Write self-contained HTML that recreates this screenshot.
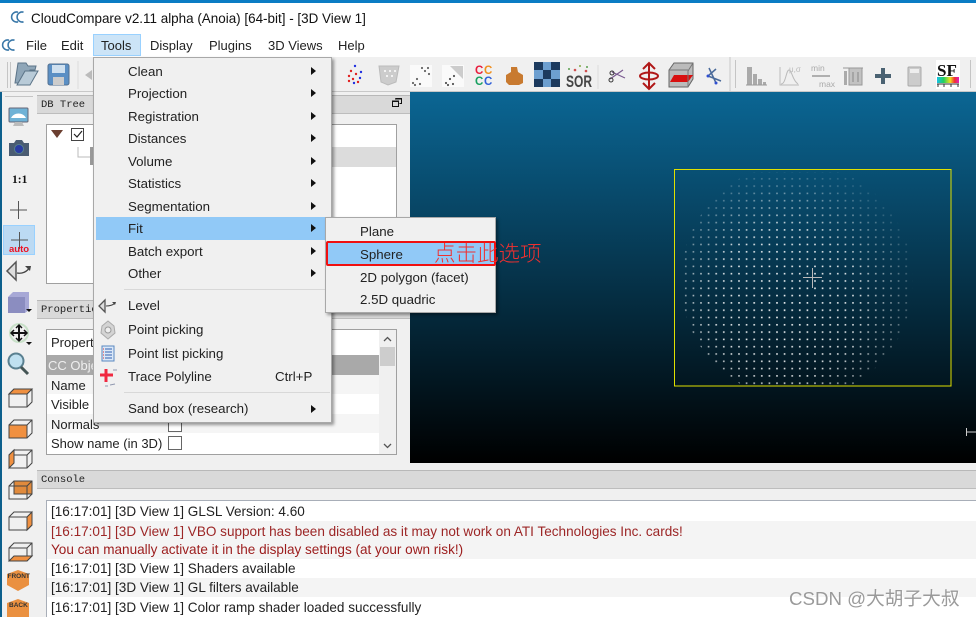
<!DOCTYPE html>
<html><head><meta charset="utf-8"><style>
html,body{margin:0;padding:0;width:976px;height:617px;overflow:hidden;background:#f0f0f0;font-family:"Liberation Sans","Noto Sans CJK SC",sans-serif;font-size:13.300px;color:#222}
#w{position:absolute;left:0;top:0;width:976px;height:617px;overflow:hidden}
.a{position:absolute;white-space:nowrap}
.t{position:absolute;white-space:nowrap;line-height:16px;height:16px;margin-top:1px}
.p{font-size:13px}
.c{font-size:13.550px;letter-spacing:0}
.dock{position:absolute;background:#d9d9d9;border-top:1px solid #b8b8b8;border-bottom:1px solid #bdbdbd;box-sizing:border-box;font:10.500px/19px "Liberation Mono",monospace;color:#222;padding-left:4px}
.box{position:absolute;background:#fff;border:1px solid #a0a0a0;box-sizing:border-box;overflow:hidden}
.ar{position:absolute;width:0;height:0;margin-top:1px;border-left:5px solid #111;border-top:4px solid transparent;border-bottom:4px solid transparent}
.menu{position:absolute;background:#f0f0f0;border:1px solid #a8a8a8;box-shadow:2px 2px 3px rgba(0,0,0,.4);box-sizing:border-box}
.cb{position:absolute;width:12px;height:12px;border:1px solid #666;background:#fff}
</style></head><body><div id="w">

<div class="a" style="left:0;top:0;width:976px;height:3px;background:#0a7cc4"></div>
<div class="a" style="left:0;top:3px;width:976px;height:54px;background:#fff"></div>
<div class="a" style="left:0;top:57px;width:976px;height:35px;background:#f0f0f0;border-bottom:1px solid #c8c8c8;box-sizing:border-box"></div>
<div class="a" style="left:0;top:92px;width:2px;height:525px;background:#0c5f8c"></div>

<svg class="a" style="left:10px;top:9px" width="18" height="16" viewBox="0 0 18 16"><g fill="none" stroke="#3a78a8" stroke-width="1.600"><path d="M8 3.200A5 5 0 1 0 8 12.800"/><path d="M13.500 3.200A5 5 0 1 0 13.500 12.800"/></g></svg>
<div class="t" style="left:31px;top:10px;color:#111;font-size:13.450px">CloudCompare v2.11 alpha (Anoia) [64-bit] - [3D View 1]</div>
<svg class="a" style="left:1px;top:37px" width="18" height="16" viewBox="0 0 18 16"><g fill="none" stroke="#3a78a8" stroke-width="1.600"><path d="M8 3.200A5 5 0 1 0 8 12.800"/><path d="M13.500 3.200A5 5 0 1 0 13.500 12.800"/></g></svg>
<div class="a" style="left:93px;top:34px;width:48px;height:22px;background:#cce4f7;border:1px solid #99d1ff;box-sizing:border-box"></div>
<div class="t p" style="left:26px;top:37px">File</div>
<div class="t p" style="left:61px;top:37px">Edit</div>
<div class="t p" style="left:101px;top:37px">Tools</div>
<div class="t p" style="left:150px;top:37px">Display</div>
<div class="t p" style="left:209px;top:37px">Plugins</div>
<div class="t p" style="left:268px;top:37px">3D Views</div>
<div class="t p" style="left:338px;top:37px">Help</div>

<!-- 3D view -->
<div class="a" style="left:410px;top:92px;width:566px;height:371px;background:linear-gradient(#0b6694 0%,#000 100%)"></div>
<svg class="a" style="left:0;top:0" width="976" height="617">
<defs>
<pattern id="p" x="683" y="176" width="7.600" height="7.300" patternUnits="userSpaceOnUse"><rect x="2" y="2" width="1.600" height="1.600" fill="#fff"/></pattern>
<radialGradient id="g" gradientUnits="userSpaceOnUse" cx="785" cy="305" r="135"><stop offset="0" stop-color="#fff"/><stop offset=".55" stop-color="#ddd"/><stop offset=".8" stop-color="#777"/><stop offset="1" stop-color="#2a2a2a"/></radialGradient>
<mask id="m" maskUnits="userSpaceOnUse" x="670" y="160" width="260" height="240"><rect x="670" y="160" width="260" height="240" fill="url(#g)"/></mask>
<clipPath id="c"><rect x="675" y="172" width="250" height="214"/></clipPath>
</defs>
<g clip-path="url(#c)"><ellipse cx="797" cy="281" rx="116" ry="118" fill="url(#p)" mask="url(#m)"/></g>
<rect x="674.500" y="169.500" width="276.500" height="216.500" fill="none" stroke="#e0e000" stroke-width="1"/>
<path d="M803 277.500H822M812.500 268V288" stroke="#bbb" stroke-width="1"/>
<path d="M966.500 428V436M967 432H976" stroke="#ccc" stroke-width="1"/>
</svg>

<!-- DB tree -->
<div class="dock" style="left:37px;top:95px;width:373px;height:19px">DB Tree</div>
<svg class="a" style="left:392px;top:98px" width="10" height="10"><path d="M3.500.500h6v5h-2M.500 3.500h6v5h-6z" fill="none" stroke="#111"/><path d="M3 1h7M0 3h7" stroke="#111"/></svg>
<div class="box" style="left:46px;top:124px;width:351px;height:160px"></div>
<div class="a" style="left:332px;top:147px;width:64px;height:20px;background:#dcdcdc"></div>
<svg class="a" style="left:46px;top:124px" width="50" height="50"><path d="M5 6H17L11 14Z" fill="#6b3f30"/><rect x="25.500" y="4.500" width="12" height="12" fill="#fff" stroke="#444"/><path d="M28 10l3 3 5-6" fill="none" stroke="#222" stroke-width="1.200"/><path d="M32 23v10h12" fill="none" stroke="#bbb"/><rect x="44" y="23" width="3" height="18" fill="#999"/></svg>

<!-- Properties -->
<div class="dock" style="left:37px;top:300px;width:373px;height:19px">Properties</div>
<div class="box" style="left:46px;top:329px;width:351px;height:126px"></div>
<div class="t p" style="left:51px;top:334px">Properties</div>
<div class="a" style="left:47px;top:355px;width:332px;height:20px;background:#a9a9a9"></div>
<div class="t p" style="left:48px;top:357px;color:#eee">CC Object</div>
<div class="a" style="left:47px;top:375px;width:332px;height:19px;background:#f5f5f5"></div>
<div class="a" style="left:47px;top:414px;width:332px;height:19px;background:#f5f5f5"></div>
<div class="t p" style="left:51px;top:377px">Name</div>
<div class="t p" style="left:51px;top:396px">Visible</div>
<div class="t p" style="left:51px;top:416px">Normals</div>
<div class="t p" style="left:51px;top:435px">Show name (in 3D)</div>
<div class="cb" style="left:168px;top:418px"></div>
<div class="cb" style="left:168px;top:436px"></div>
<div class="a" style="left:379px;top:330px;width:17px;height:124px;background:#f0f0f0"></div>
<div class="a" style="left:380px;top:347px;width:15px;height:19px;background:#cdcdcd"></div>
<svg class="a" style="left:379px;top:330px" width="17" height="124"><path d="M5 11l3.500-3.500L12 11M5 114l3.500 3.500L12 114" fill="none" stroke="#555" stroke-width="1.300"/></svg>

<!-- Console -->
<div class="dock" style="left:37px;top:470px;width:939px;height:19px">Console</div>
<div class="box" style="left:46px;top:500px;width:940px;height:127px;border-color:#a8aeb8"></div>
<div class="a" style="left:47px;top:521px;width:929px;height:38px;background:#f4f4f4"></div>
<div class="a" style="left:47px;top:578px;width:929px;height:19px;background:#f4f4f4"></div>
<div class="t c" style="left:51px;top:503px">[16:17:01] [3D View 1] GLSL Version: 4.60</div>
<div class="t c" style="left:51px;top:523px;color:#9c2626">[16:17:01] [3D View 1] VBO support has been disabled as it may not work on ATI Technologies Inc. cards!</div>
<div class="t c" style="left:51px;top:541px;color:#9c1c1c">You can manually activate it in the display settings (at your own risk!)</div>
<div class="t c" style="left:51px;top:560px">[16:17:01] [3D View 1] Shaders available</div>
<div class="t c" style="left:51px;top:579px">[16:17:01] [3D View 1] GL filters available</div>
<div class="t c" style="left:51px;top:599px">[16:17:01] [3D View 1] Color ramp shader loaded successfully</div>

<!-- Toolbar & side icons -->
<svg class="a" style="left:0;top:0" width="976" height="617" font-family="Liberation Sans, sans-serif">
<g fill="#999"><path d="M7 62h1v26H7zM10 62h1v26h-1z" opacity=".5"/><path d="M735 60h1v28h-1zM970 60h1v28h-1zM5 96h28v1H5z" opacity=".5"/></g>
<!-- folder -->
<path d="M15 83l3-20h8l2 3h8l-1 4h-5l-6 13z" fill="#8fa6b8" stroke="#5c7488"/><path d="M17 85l8-14h13l-8 14z" fill="#b9cbd8" stroke="#5c7488"/>
<!-- save -->
<rect x="48" y="64" width="21" height="21" rx="2" fill="#5b8fc4" stroke="#53708f"/><rect x="52" y="65" width="13" height="8" fill="#cfe0ef"/><rect x="53" y="77" width="11" height="8" fill="#ccc"/>
<path d="M78 61v28" stroke="#ddd"/>
<path d="M92 70l-7 5 7 5z" fill="#bbb"/>
<!-- dots -->
<g fill="#e02020"><circle cx="351" cy="71" r="1.200"/><circle cx="356" cy="74" r="1.200"/><circle cx="349" cy="76" r="1.200"/><circle cx="353" cy="79" r="1.200"/><circle cx="358" cy="82" r="1.200"/><circle cx="349" cy="81" r="1.200"/></g>
<g fill="#2030e0"><circle cx="355" cy="66" r="1.200"/><circle cx="361" cy="72" r="1.200"/><circle cx="360" cy="78" r="1.200"/><circle cx="354" cy="83" r="1.200"/></g>
<!-- mesh -->
<path d="M379 66h20l-3 16-8 3-7-3z" fill="#ccc" stroke="#bbb"/><g fill="#fff"><circle cx="385" cy="71" r="1"/><circle cx="390" cy="71" r="1"/><circle cx="395" cy="71" r="1"/><circle cx="387" cy="76" r="1"/><circle cx="392" cy="76" r="1"/></g>
<rect x="410" y="65" width="22" height="22" fill="#fafafa"/><g fill="#666"><circle cx="413" cy="83" r="1.100"/><circle cx="417" cy="79" r="1.100"/><circle cx="415" cy="85" r="1.100"/><circle cx="420" cy="84" r="1.100"/><circle cx="425" cy="71" r="1.100"/><circle cx="428" cy="68" r="1.100"/><circle cx="429" cy="74" r="1.100"/><circle cx="422" cy="68" r="1.100"/></g>
<rect x="442" y="65" width="22" height="22" fill="#fafafa"/><path d="M450 66h13v13z" fill="#ccc"/><g fill="#555"><circle cx="446" cy="83" r="1.100"/><circle cx="450" cy="79" r="1.100"/><circle cx="448" cy="85" r="1.100"/><circle cx="453" cy="84" r="1.100"/><circle cx="454" cy="76" r="1.100"/></g>
<g font-weight="bold" font-size="11.500"><text x="475" y="74" fill="#e81c3c">C</text><text x="484" y="74" fill="#f09020">C</text><text x="475" y="85" fill="#18a060">C</text><text x="484" y="85" fill="#3060d8">C</text></g>
<path d="M511 67h6l1 5 5 3v8l-4 2h-10l-3-3v-7l5-3z" fill="#c87a30"/>
<!-- checker -->
<rect x="534" y="62" width="26" height="25" fill="#1c3a5e"/><g fill="#6d9fd0"><rect x="543" y="62" width="8" height="8"/><rect x="534" y="70" width="9" height="9"/><rect x="551" y="70" width="9" height="9"/><rect x="543" y="79" width="8" height="8"/></g>
<text x="566" y="87" font-size="17" font-weight="bold" fill="#444" textLength="26" lengthAdjust="spacingAndGlyphs">SOR</text>
<g fill="#5aa050"><circle cx="569" cy="69" r="1"/><circle cx="587" cy="67" r="1"/></g><g fill="#d05050"><circle cx="575" cy="70" r="1.300"/><circle cx="586" cy="71" r="1.300"/></g><circle cx="580" cy="66" r="1" fill="#88a848"/>
<path d="M598 65v24" stroke="#ddd"/>
<path d="M610 79l13-9M612 72l13 6" stroke="#7a5a90" stroke-width="1.200" fill="none"/><circle cx="611" cy="80" r="2" fill="none" stroke="#333"/><circle cx="612" cy="73" r="2" fill="none" stroke="#333"/>
<path d="M649 64v24M643 69l6-6 6 6M643 83l6 6 6-6" stroke="#b01818" stroke-width="2" fill="none"/><ellipse cx="649" cy="76" rx="9" ry="3.500" fill="none" stroke="#b01818" stroke-width="2"/>
<path d="M669 70l5-7h19v16l-5 8h-19z" fill="#bbb" stroke="#666"/><path d="M670 82l4-7h19l-5 7z" fill="#d81010"/><path d="M688 71v16M688 71l5-8M669 70h19" stroke="#777" fill="none"/>
<path d="M709 68l7 15M716 69l-8 7 13 5" stroke="#4a6a9a" stroke-width="1.500" fill="none"/><circle cx="708" cy="76" r="1.500" fill="#3050d0"/><circle cx="716" cy="83" r="1.500" fill="#3050d0"/>
<path d="M730 57v34" stroke="#c8c8c8"/>
<!-- disabled -->
<g fill="#aaa"><rect x="747" y="67" width="5" height="18"/><rect x="753" y="74" width="4" height="11"/><rect x="758" y="79" width="4" height="6"/><rect x="763" y="82" width="3" height="3"/></g><path d="M746 85h21" stroke="#999"/>
<path d="M780 67v18h19" stroke="#bbb" fill="none"/><path d="M781 84c5 0 5-14 8-14s3 10 9 14" stroke="#bbb" fill="none"/><text x="789" y="72" font-size="8" fill="#bbb">μ,σ</text>
<text x="811" y="71" font-size="8.500" fill="#aaa">min</text><text x="819" y="87" font-size="8.500" fill="#aaa">max</text><path d="M812 76h18" stroke="#999" stroke-width="1.500"/>
<rect x="844" y="71" width="3" height="14" fill="#aaa"/><path d="M849 68h13v17h-13zM843 68h20" fill="#c2c2c2" stroke="#999"/><path d="M853 72v10M858 72v10" stroke="#888"/>
<path d="M883 68v16M875 76h16" stroke="#4a6272" stroke-width="4"/>
<rect x="908" y="67" width="13" height="19" rx="1" fill="#ccc" stroke="#aaa"/><rect x="910" y="69" width="9" height="4" fill="#eee"/>
<rect x="936" y="60" width="24" height="29" fill="#fff"/><text x="937" y="76" font-family="Liberation Serif,serif" font-size="17" font-weight="bold" fill="#111">SF</text>
<defs><linearGradient id="rb"><stop offset="0" stop-color="#18c0e8"/><stop offset=".3" stop-color="#20d060"/><stop offset=".6" stop-color="#f0e020"/><stop offset=".8" stop-color="#f03030"/><stop offset="1" stop-color="#e020c0"/></linearGradient></defs>
<rect x="937" y="77" width="22" height="6" fill="url(#rb)"/><path d="M937 84h22M938 84v3M944 84v3M951 84v3M958 84v3" stroke="#333"/>

<!-- side -->
<rect x="9" y="108" width="19" height="14" rx="1" fill="#6fb2d6" stroke="#667"/><path d="M11 118c3-6 12-6 15 0" fill="#fff"/><path d="M15 122h7l2 4H13z" fill="#bbb"/>
<path d="M9 143h5l2-3h6l2 3h5v13H9z" fill="#4a5c72"/><circle cx="19" cy="149" r="4.500" fill="#2a3ca0" stroke="#8ea" stroke-opacity=".3"/>
<text x="12" y="183" font-family="Liberation Serif,serif" font-size="11.500" font-weight="bold" fill="#111">1:1</text>
<path d="M10 210h17M18.500 201v18" stroke="#555" stroke-width="1"/>
<rect x="3.500" y="225.500" width="31" height="29" fill="#bcdaf3" stroke="#99d1ff"/>
<path d="M11 240h17M19.500 232v17" stroke="#555"/><text x="9" y="252" font-size="9.500" font-weight="bold" fill="#ee1122">auto</text>
<path d="M16 262v18l-9-9z" fill="#ddd" stroke="#555" stroke-width="1.500"/><path d="M17 273c5 1 10-1 13-6" fill="none" stroke="#444" stroke-width="1.300"/><path d="M25 266l6 0-1 5z" fill="#444"/>
<path d="M8 297l5-5h16v18l-4 3H8z" fill="#a7a8d6"/><path d="M8 297h17v16H8z" fill="#8b8dc0"/><path d="M26 309h6l-3 3z" fill="#111"/>
<circle cx="19" cy="333" r="9" fill="none" stroke="#c8e0c8" stroke-width="2"/><path d="M19 325v16M11 333h16" stroke="#111" stroke-width="2"/><path d="M16 328l3-3 3 3M16 338l3 3 3-3M14 330l-3 3 3 3M24 330l3 3-3 3" fill="none" stroke="#111" stroke-width="1.500"/><path d="M26 342h6l-3 3z" fill="#111"/>
<circle cx="16" cy="361" r="7.500" fill="#bfe0f0" stroke="#5a8090" stroke-width="2"/><path d="M21 367l7 7" stroke="#455" stroke-width="3"/>
<!-- cubes -->
<g stroke="#444" stroke-width="1" fill="none">
<path d="M14 389l-5 5v13h18l5-5v-13zM9 394h18v13M27 394l5-5"/><path d="M14 389h18l-5 5H9z" fill="#f09040"/>
<path d="M14 420l-5 5v13h18l5-5v-13z"/><path d="M9 425h18v13H9z" fill="#f09040"/><path d="M27 425l5-5"/>
<path d="M14 450l-5 5v13h18l5-5v-13zM9 455h18M27 455v13M27 455l5-5"/><path d="M9 455l5-5v13l-5 5z" fill="#f09040"/>
<path d="M14 481h18v13H14z" fill="#e08a3c"/><path d="M14 481l-5 5v13h18l5-5v-13zM9 486h18v13M27 486l5-5"/>
<path d="M14 512l-5 5v13h18l5-5v-13zM9 517h18v13"/><path d="M27 517l5-5v13l-5 5z" fill="#f09040"/>
<path d="M14 543l-5 5v13h18l5-5v-13zM9 548h18v13M27 548l5-5"/><path d="M14 556h18l-5 5H9z" fill="#f09040"/>
</g>
<path d="M18 570l11 4v11l-11 6-11-6v-11z" fill="#ea9040"/><text x="7.500" y="578" font-size="6.500" font-weight="bold" fill="#333">FRONT</text>
<path d="M18 599l11 4v14H7v-14z" fill="#ea9040"/><text x="9" y="607" font-size="6.500" font-weight="bold" fill="#333">BACK</text>
</svg>

<!-- Tools menu -->
<div class="menu" style="left:93px;top:57px;width:239px;height:366px"></div>
<div class="a" style="left:96px;top:217px;width:234px;height:23px;background:#91c9f7"></div>
<div class="t" style="left:128px;top:63px">Clean</div><div class="ar" style="left:311px;top:66px"></div>
<div class="t" style="left:128px;top:85px">Projection</div><div class="ar" style="left:311px;top:88px"></div>
<div class="t" style="left:128px;top:108px">Registration</div><div class="ar" style="left:311px;top:111px"></div>
<div class="t" style="left:128px;top:130px">Distances</div><div class="ar" style="left:311px;top:133px"></div>
<div class="t" style="left:128px;top:153px">Volume</div><div class="ar" style="left:311px;top:156px"></div>
<div class="t" style="left:128px;top:175px">Statistics</div><div class="ar" style="left:311px;top:178px"></div>
<div class="t" style="left:128px;top:198px">Segmentation</div><div class="ar" style="left:311px;top:201px"></div>
<div class="t" style="left:128px;top:220px">Fit</div><div class="ar" style="left:311px;top:223px"></div>
<div class="t" style="left:128px;top:243px">Batch export</div><div class="ar" style="left:311px;top:246px"></div>
<div class="t" style="left:128px;top:265px">Other</div><div class="ar" style="left:311px;top:268px"></div>
<div class="a" style="left:124px;top:289px;width:206px;height:1px;background:#d8d8d8"></div>
<div class="t" style="left:128px;top:297px">Level</div>
<div class="t" style="left:128px;top:321px">Point picking</div>
<div class="t" style="left:128px;top:345px">Point list picking</div>
<div class="t" style="left:128px;top:368px">Trace Polyline</div>
<div class="t" style="left:275px;top:368px">Ctrl+P</div>
<div class="a" style="left:124px;top:392px;width:206px;height:1px;background:#d8d8d8"></div>
<div class="t" style="left:128px;top:400px">Sand box (research)</div><div class="ar" style="left:311px;top:404px"></div>
<svg class="a" style="left:93px;top:295px" width="30" height="100">
<path d="M7 5v12l-6-6z" transform="translate(5 0)" fill="#ddd" stroke="#555" stroke-width="1.300"/><path d="M13 11c2 0 6 0 9-3" fill="none" stroke="#444"/><path d="M19 7h4l-1 3z" fill="#444"/>
<path d="M15 26l6 5 1 7-7 6-7-6 1-7z" fill="#d4d4d4" stroke="#aaa"/><circle cx="15" cy="35" r="3" fill="#eee" stroke="#999"/>
<rect x="9" y="51" width="12" height="15" fill="#dbe8f8" stroke="#5a88c0"/><path d="M12 54h7M12 57h7M12 60h7M12 63h7" stroke="#3060b0"/><path d="M10 54h1M10 57h1M10 60h1M10 63h1" stroke="#e03030"/>
<path d="M13 74v13M7 80h13" stroke="#f02840" stroke-width="3"/><path d="M20 75h4M17 90l5 -1M12 91h3" stroke="#9098b0"/>
</svg>

<!-- Fit submenu -->
<div class="menu" style="left:325px;top:217px;width:171px;height:96px"></div>
<div class="a" style="left:328px;top:243px;width:166px;height:22px;background:#91c9f7"></div>
<div class="t" style="left:360px;top:223px">Plane</div>
<div class="t" style="left:360px;top:246px">Sphere</div>
<div class="t" style="left:360px;top:269px">2D polygon (facet)</div>
<div class="t" style="left:360px;top:291px">2.5D quadric</div>
<div class="a" style="left:326px;top:241px;width:170px;height:25px;border:2px solid #f01010;border-radius:2px;box-sizing:border-box"></div>
<div class="a" style="left:434px;top:239px;font:300 21.500px/27px 'Noto Sans CJK SC',sans-serif;color:#f03030">点击此选项</div>

<div class="a" style="left:789px;top:587px;font:18.700px/24px 'Liberation Sans','Noto Sans CJK SC',sans-serif;color:#9a9a9a;text-shadow:1px 1px 0 rgba(255,255,255,.7)">CSDN @大胡子大叔</div>
</div></body></html>
